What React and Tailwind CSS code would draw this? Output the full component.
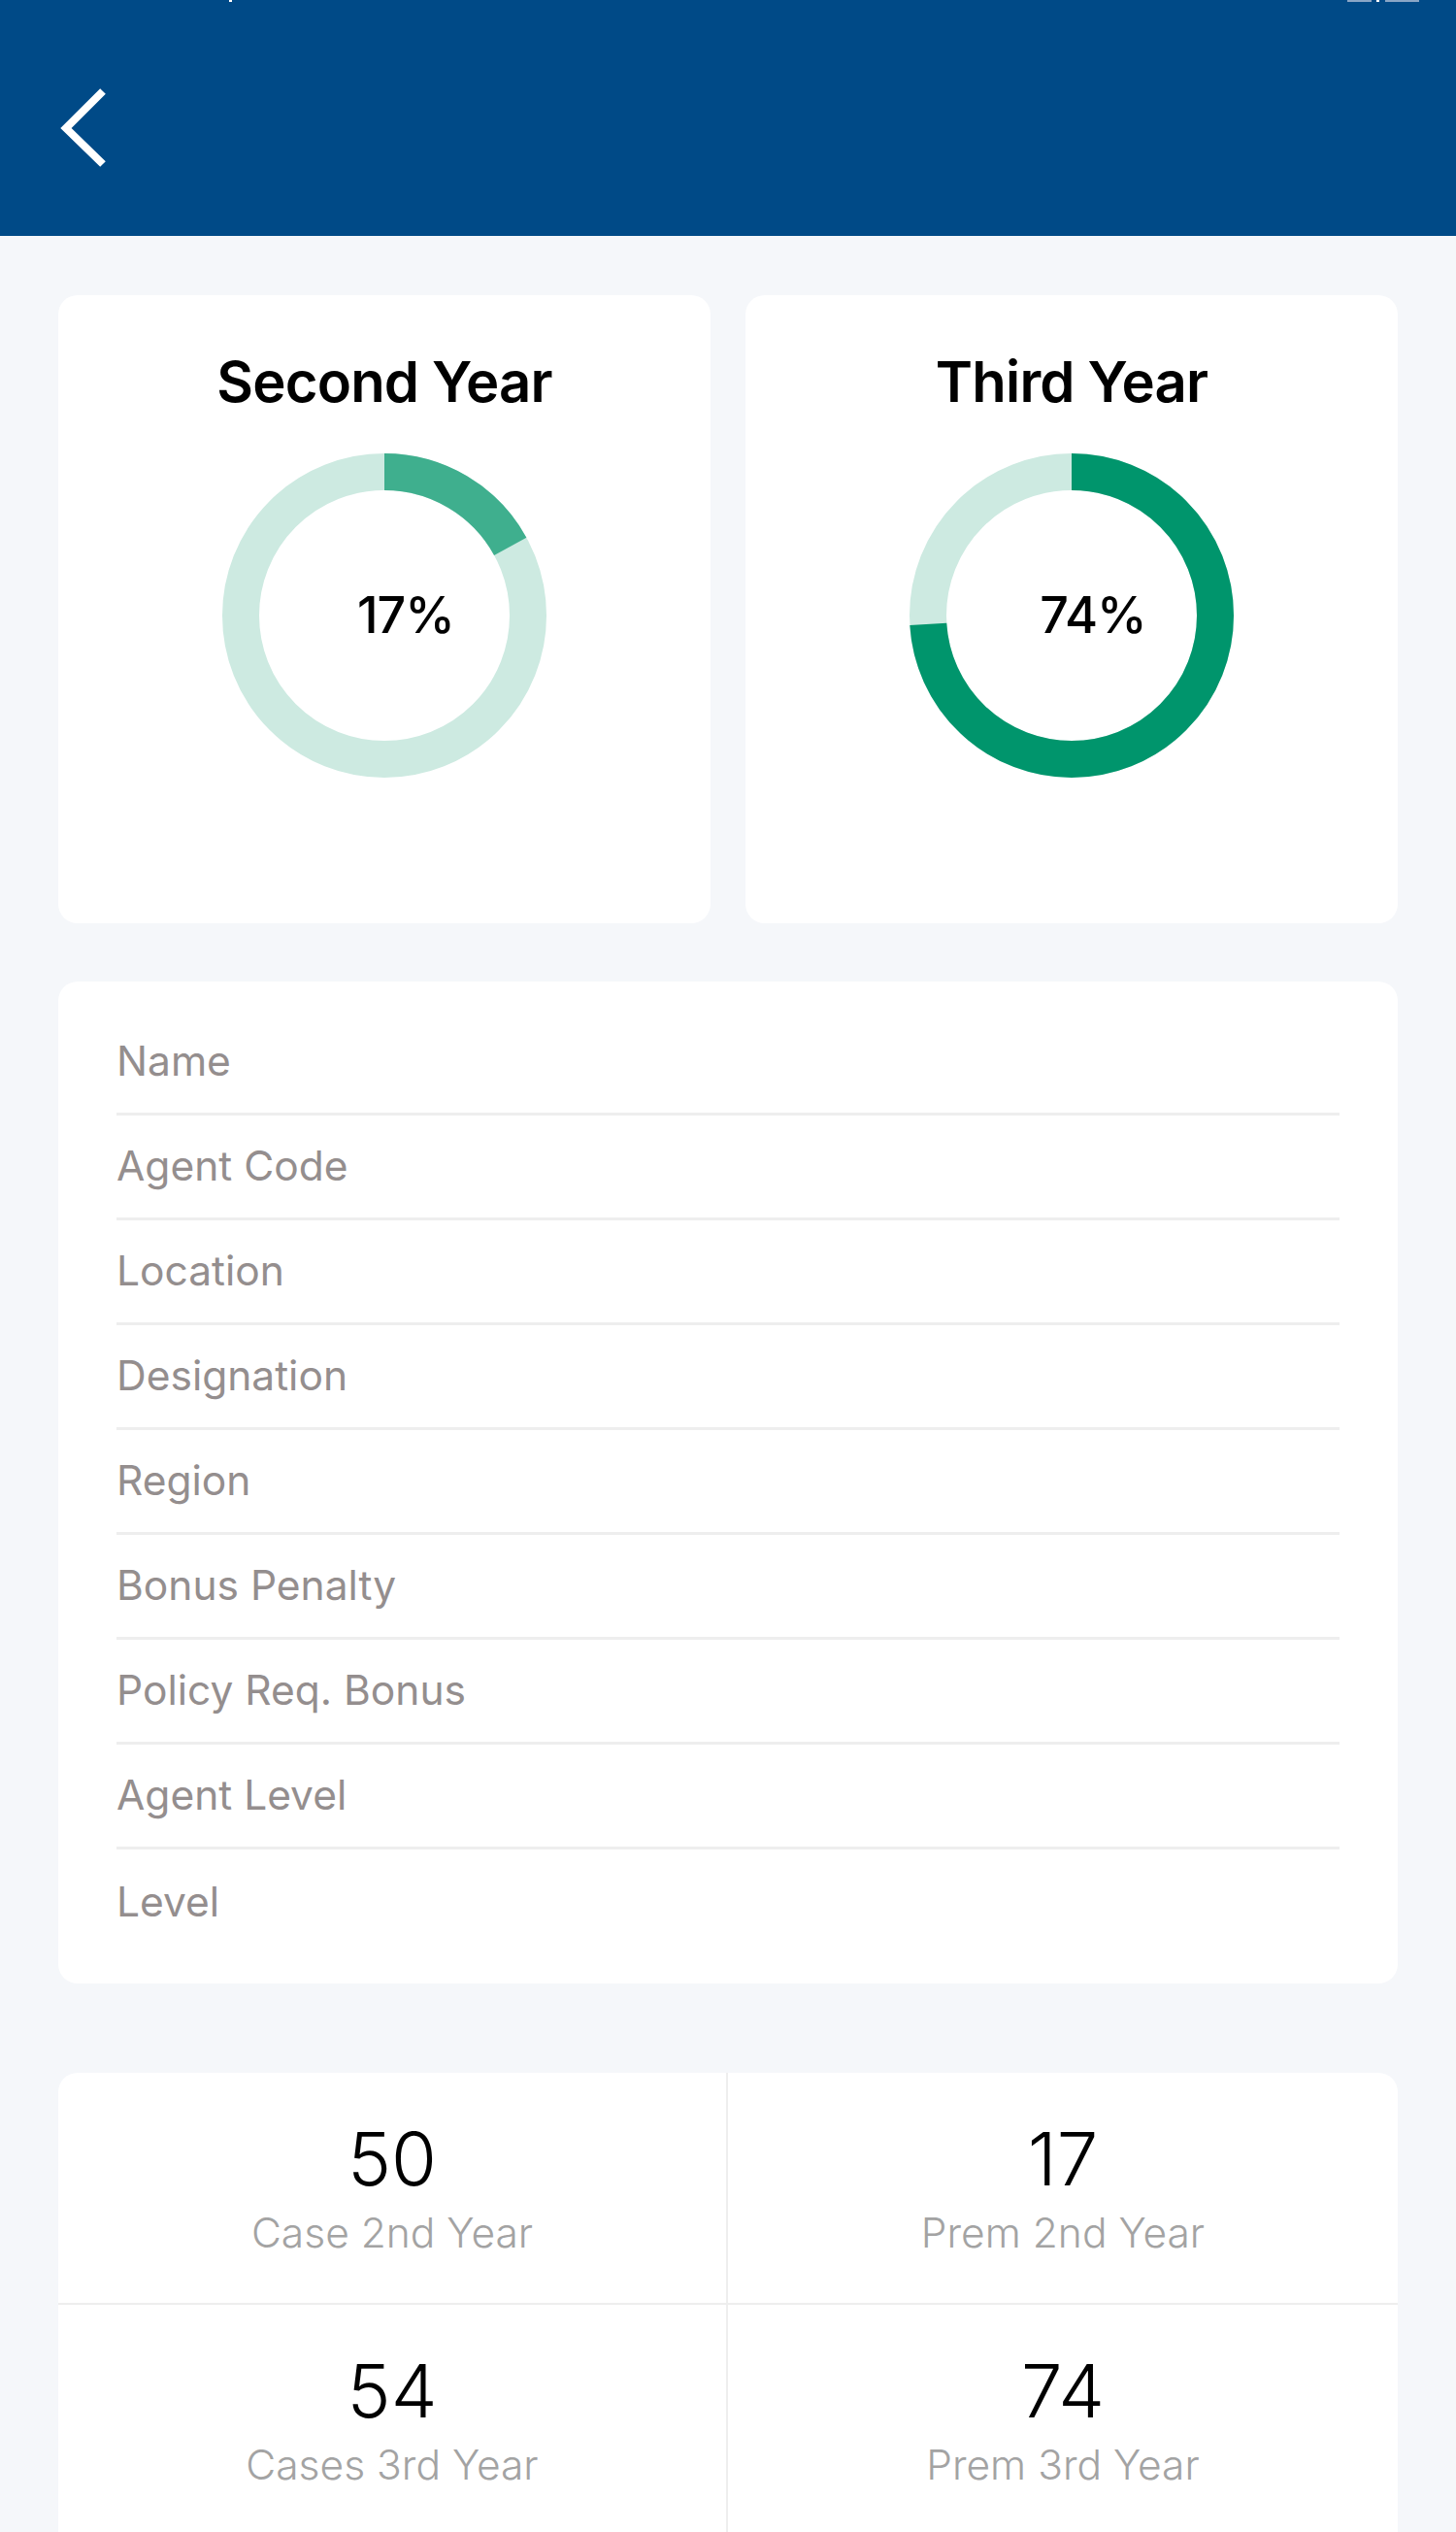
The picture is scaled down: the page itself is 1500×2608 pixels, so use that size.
import React from 'react';

const font = { fontFamily: 'Inter, "Noto Sans", sans-serif' };

const Donut = ({ percent, color }) => {
  const r = 148;
  const circumference = 2 * Math.PI * r;
  const dash = (percent / 100) * circumference;
  return (
    <div className="relative w-[334px] h-[334px]">
      <svg width="334" height="334" viewBox="0 0 334 334">
        <circle cx="167" cy="167" r={r} fill="none" stroke="#cdeae1" strokeWidth="38" />
        <circle
          cx="167"
          cy="167"
          r={r}
          fill="none"
          stroke={color}
          strokeWidth="38"
          strokeDasharray={`${dash} ${circumference}`}
          transform="rotate(-90 167 167)"
        />
      </svg>
      <div className="absolute inset-0 flex items-center justify-center">
        <span className="translate-x-[22px] text-[52px] leading-none font-medium tracking-[-1px] text-black">{percent}%</span>
      </div>
    </div>
  );
};

const YearCard = ({ title, percent, color }) => (
  <div className="h-[647px] rounded-[20px] bg-white flex flex-col items-center pt-[60px]">
    <h2 className="text-[58px] leading-none font-semibold text-black tracking-[-0.8px]">{title}</h2>
    <div className="mt-[45px]">
      <Donut percent={percent} color={color} />
    </div>
  </div>
);

const fields = [
  'Name',
  'Agent Code',
  'Location',
  'Designation',
  'Region',
  'Bonus Penalty',
  'Policy Req. Bonus',
  'Agent Level',
  'Level',
];

const stats = [
  { value: 50, label: 'Case 2nd Year' },
  { value: 17, label: 'Prem 2nd Year' },
  { value: 54, label: 'Cases 3rd Year' },
  { value: 74, label: 'Prem 3rd Year' },
];

export default function App() {
  return (
    <div className="relative w-full h-[2608px] overflow-hidden bg-[#f5f7fa]" style={font}>
      {/* Header */}
      <header className="relative h-[243px] bg-[#004a87] pt-[90px] pl-[62px]">
        {/* clipped status bar remnants */}
        <div className="absolute top-0 left-[236px] w-[3px] h-[2px] bg-white" />
        <div className="absolute top-0 left-[1388px] w-[25px] h-[2px] bg-[#8aa6c6]" />
        <div className="absolute top-0 left-[1418px] w-[3px] h-[2px] bg-white" />
        <div className="absolute top-0 left-[1427px] w-[35px] h-[2px] bg-[#8aa6c6]" />
        <button className="block">
          <svg width="52" height="84" viewBox="0 0 52 84" fill="none">
            <polyline
              points="44,4 6,42 44,79"
              stroke="#ffffff"
              strokeWidth="8"
              strokeLinejoin="miter"
              strokeLinecap="butt"
            />
          </svg>
        </button>
      </header>

      <main className="px-[60px] pt-[61px]">
        {/* Year progress cards */}
        <div className="grid grid-cols-2 gap-[36px]">
          <YearCard title="Second Year" percent={17} color="#3faf8e" />
          <YearCard title="Third Year" percent={74} color="#00956c" />
        </div>

        {/* Agent details */}
        <div className="mt-[60px] rounded-[20px] bg-white px-[60px] py-[30px]">
          {fields.map((field, i) => (
            <div
              key={field}
              className={`h-[108px] flex items-center text-[42.5px] leading-none text-[#948e8e] ${
                i < fields.length - 1 ? 'border-b-[3px] border-[#eeeeee]' : ''
              }`}
            >
              {field}
            </div>
          ))}
        </div>

        {/* Stats */}
        <div className="mt-[92px] rounded-t-[20px] bg-white grid grid-cols-2">
          {stats.map((s, i) => (
            <div
              key={s.label}
              className={`h-[239px] flex flex-col items-center pt-[50px] ${
                i % 2 === 0 ? 'border-r-2 border-[#eeeeee]' : ''
              } ${i < 2 ? 'border-b-2 border-[#eeeeee]' : ''}`}
            >
              <span className="text-[76px] leading-none font-light text-black">{s.value}</span>
              <span className="mt-[18px] text-[42.5px] leading-none font-light text-[#a3a3a3]">{s.label}</span>
            </div>
          ))}
        </div>
      </main>
    </div>
  );
}
